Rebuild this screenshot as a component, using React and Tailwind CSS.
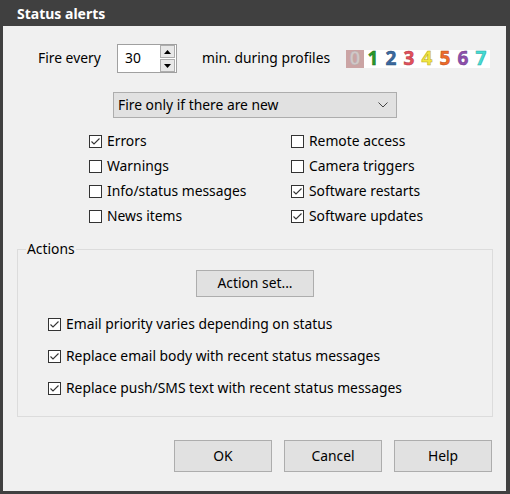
import React from 'react';

const font = { fontFamily: '"Noto Sans", "Segoe UI", sans-serif' };

function Check({ checked, label }) {
  return (
    <div className="flex items-center h-full">
      <span className="w-[13px] h-[13px] border border-[#333333] bg-white flex items-center justify-center shrink-0">
        {checked && (
          <svg width="11" height="11" viewBox="0 0 11 11">
            <polyline points="1.5,5.5 4,8 9.5,2.5" fill="none" stroke="#333333" strokeWidth="1.1" />
          </svg>
        )}
      </span>
      <span className="ml-[5px] whitespace-nowrap">{label}</span>
    </div>
  );
}

function Btn({ children, className }) {
  return (
    <button className={'bg-[#e1e1e1] border border-[#adadad] text-black flex items-center justify-center ' + className}>
      {children}
    </button>
  );
}

const profiles = [
  { n: '0', c: 'text-[#d0c8c8] [-webkit-text-stroke:0.5px_#b8a8a8]', bg: 'bg-[#cba4a4]' },
  { n: '1', c: 'text-[#2a9a2a] [-webkit-text-stroke:0.5px_#1c6e1c]' },
  { n: '2', c: 'text-[#3a6aa0] [-webkit-text-stroke:0.5px_#2a4c78]' },
  { n: '3', c: 'text-[#e4505c] [-webkit-text-stroke:0.5px_#b03a44]' },
  { n: '4', c: 'text-[#f2e640] [-webkit-text-stroke:0.5px_#b8a820]' },
  { n: '5', c: 'text-[#ee6a2a] [-webkit-text-stroke:0.5px_#b84c18]' },
  { n: '6', c: 'text-[#8e50ae] [-webkit-text-stroke:0.5px_#6a3884]' },
  { n: '7', c: 'text-[#44dcd4] [-webkit-text-stroke:0.5px_#28a8a0]' },
];

export default function App() {
  return (
    <div style={font} className="w-[510px] h-[494px] bg-[#f0f0f0] border-l-[3px] border-r-[4px] border-b-[3px] border-[#404040] flex flex-col text-[13.85px] text-black">
      <div className="h-[26px] shrink-0 bg-[#404040] text-white font-bold flex items-center pl-[14px] text-[14px]">
        Status alerts
      </div>

      {/* fire every row */}
      <div className="flex items-center h-[29px] mt-[18px]">
        <span className="w-[114px] pl-[35px] whitespace-nowrap">Fire every</span>
        <div className="w-[60px] h-[29px] border border-[#a0a0a0] bg-white flex">
          <span className="flex-1 pl-[7px] flex items-center">30</span>
          <div className="w-[16px] flex flex-col justify-center gap-[1px] pr-[1px]">
            <span className="h-[13px] bg-[#e8e8e8] border border-[#adadad] flex items-center justify-center">
              <svg width="7" height="4" viewBox="0 0 7 4"><polygon points="0,4 7,4 3.5,0" fill="#000" /></svg>
            </span>
            <span className="h-[13px] bg-[#e8e8e8] border border-[#adadad] flex items-center justify-center">
              <svg width="7" height="4" viewBox="0 0 7 4"><polygon points="0,0 7,0 3.5,4" fill="#000" /></svg>
            </span>
          </div>
        </div>
        <span className="ml-[25px] w-[144px] whitespace-nowrap">min. during profiles</span>
        <div className="flex bg-white h-[18px]">
          {profiles.map((p) => (
            <span key={p.n} className={'w-[18px] flex items-center justify-center font-bold text-[19px] leading-none ' + p.c + ' ' + (p.bg || '')}>
              {p.n}
            </span>
          ))}
        </div>
      </div>

      {/* dropdown */}
      <div className="ml-[110px] mt-[19px] w-[284px] h-[26px] bg-[#e1e1e1] border border-[#adadad] flex items-center pl-[4px] pr-[8px]">
        <span className="flex-1">Fire only if there are new</span>
        <svg width="10" height="6" viewBox="0 0 10 6">
          <polyline points="0.5,0.5 5,5 9.5,0.5" fill="none" stroke="#444" strokeWidth="1" />
        </svg>
      </div>

      {/* message type checks */}
      <div className="grid grid-cols-[202px_1fr] auto-rows-[25px] ml-[86px] mt-[11px]">
        <Check checked label="Errors" />
        <Check label="Remote access" />
        <Check label="Warnings" />
        <Check label="Camera triggers" />
        <Check label="Info/status messages" />
        <Check checked label="Software restarts" />
        <Check label="News items" />
        <Check checked label="Software updates" />
      </div>

      {/* actions group */}
      <div className="relative ml-[14px] mt-[20px] w-[476px] h-[168px] border border-[#dcdcdc] flex flex-col">
        <span className="absolute -top-[11px] left-[8px] px-[1px] bg-[#f0f0f0]">Actions</span>
        <div className="flex justify-center mt-[20px]">
          <Btn className="w-[118px] h-[27px]">Action set...</Btn>
        </div>
        <div className="flex flex-col ml-[30px] mt-[11px]">
          <div className="h-[32px]"><Check checked label="Email priority varies depending on status" /></div>
          <div className="h-[32px]"><Check checked label="Replace email body with recent status messages" /></div>
          <div className="h-[32px]"><Check checked label="Replace push/SMS text with recent status messages" /></div>
        </div>
      </div>

      {/* bottom buttons */}
      <div className="flex justify-end gap-[12px] pr-[14px] mt-[23px]">
        <Btn className="w-[98px] h-[32px]">OK</Btn>
        <Btn className="w-[98px] h-[32px]">Cancel</Btn>
        <Btn className="w-[98px] h-[32px]">Help</Btn>
      </div>
    </div>
  );
}
